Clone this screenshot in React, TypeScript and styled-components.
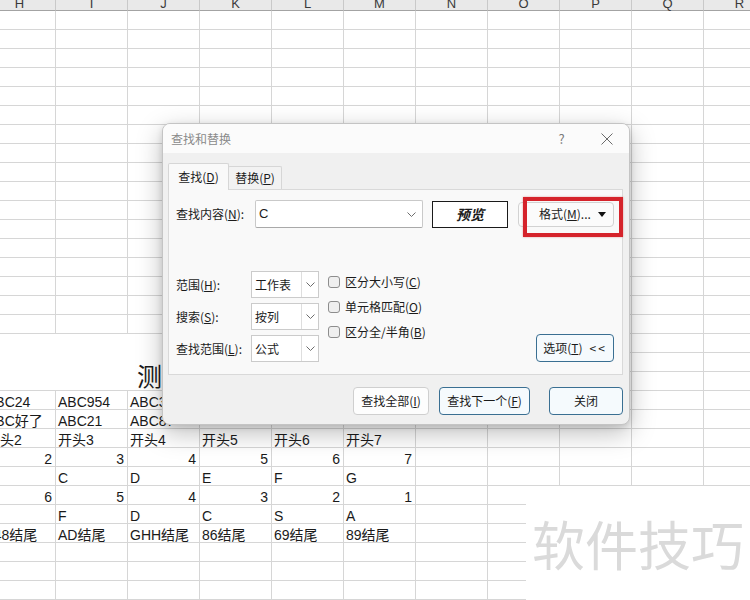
import React from 'react';
import styled, { createGlobalStyle } from 'styled-components';

const GlobalStyle = createGlobalStyle`
  *, *::before, *::after { box-sizing: border-box; }
  html, body { margin: 0; padding: 0; background: #ffffff; }
  body { font-family: "Liberation Sans", "Noto Sans CJK SC", sans-serif; }
`;

const Screen = styled.div`
  position: relative;
  width: 750px;
  height: 600px;
  overflow: hidden;
  background: #ffffff;
  font-family: "Liberation Sans", "Noto Sans CJK SC", sans-serif;
`;

/* ---------- spreadsheet ---------- */

const Sheet = styled.div`
  display: grid;
  grid-template-columns: repeat(11, 72px);
  grid-template-rows: 23px;
  grid-auto-rows: 19px;
  width: 792px;
  margin: -12px 0 0 -16px;
`;

const ColHeader = styled.div`
  display: flex;
  align-items: flex-end;
  justify-content: center;
  background: #e9e9e9;
  border-right: 1px solid #c9c9c9;
  border-bottom: 1px solid #a3a3a3;
  font-size: 13px;
  line-height: 13px;
  color: #3a3a3a;
`;

const Cell = styled.div<{ $num?: boolean }>`
  border-right: 1px solid #d6d6d6;
  border-bottom: 1px solid #d6d6d6;
  padding: 2px 3px 0 2px;
  font-size: 14px;
  line-height: 18px;
  color: #1a1a1a;
  white-space: nowrap;
  text-align: ${(p) => (p.$num ? 'right' : 'left')};
`;

const TitleCell = styled.div`
  grid-column: span 6;
  grid-row: span 3;
  border-right: 1px solid #d6d6d6;
  border-bottom: 1px solid #d6d6d6;
  display: flex;
  align-items: flex-end;
  justify-content: center;
  font-size: 25px;
  line-height: 25px;
  color: #1a1a1a;
  white-space: nowrap;
`;

const Watermark = styled.div`
  position: absolute;
  left: 526px;
  top: 486px;
  right: 0;
  bottom: 0;
  background: #ffffff;
  display: flex;
  align-items: center;
  justify-content: center;
  font-family: "Noto Sans CJK SC", sans-serif;
  font-size: 53px;
  line-height: 1;
  color: #dadada;
`;

/* ---------- dialog ---------- */

const Dialog = styled.div`
  position: absolute;
  left: 162px;
  top: 123px;
  width: 468px;
  height: 302px;
  display: flex;
  flex-direction: column;
  background: #f0f0f0;
  border: 1px solid #c4c4c4;
  border-radius: 8px;
  overflow: hidden;
  box-shadow: 0 8px 26px rgba(0, 0, 0, 0.26), 0 2px 6px rgba(0, 0, 0, 0.12);
  font-family: "Noto Sans CJK SC", "Liberation Sans", sans-serif;
  font-size: 12px;
  line-height: 16px;
  color: #1b1b1b;
`;

const TitleBar = styled.div`
  display: flex;
  align-items: center;
  height: 29px;
  padding-left: 8px;
  background: #fbfbfb;
`;

const TitleText = styled.div`
  flex: 1;
  color: #8a8a8a;
`;

const TitleButton = styled.div`
  width: 45px;
  height: 29px;
  display: flex;
  align-items: center;
  justify-content: center;
  color: #7a7a7a;
  font-size: 13px;
`;

const Body = styled.div`
  display: flex;
  flex-direction: column;
  padding: 10px 6px 9px 5px;
`;

const TabStrip = styled.div`
  display: flex;
  align-items: flex-end;
  height: 26px;
`;

const Tab = styled.div<{ $active?: boolean; $w: number }>`
  position: relative;
  z-index: 1;
  width: ${(p) => p.$w}px;
  height: ${(p) => (p.$active ? 27 : 23)}px;
  margin-bottom: ${(p) => (p.$active ? -1 : 0)}px;
  margin-left: ${(p) => (p.$active ? 0 : -1)}px;
  display: flex;
  align-items: center;
  justify-content: center;
  background: ${(p) => (p.$active ? '#f9f9f9' : '#f2f2f2')};
  border: 1px solid #d6d6d6;
  border-bottom: none;
  border-radius: 2px 2px 0 0;
`;

const Panel = styled.div`
  position: relative;
  height: 186px;
  background: #f9f9f9;
  border: 1px solid #d9d9d9;
`;

const Highlight = styled.div`
  position: absolute;
  left: 354px;
  top: 7px;
  width: 100px;
  height: 40px;
  border: 4px solid #d5232b;
  box-shadow: 0 0 2px rgba(180, 0, 0, 0.35);
  z-index: 2;
`;

const FindRow = styled.div`
  display: flex;
  align-items: center;
  height: 28px;
  margin-top: 10px;
  padding-left: 7px;
`;

const FieldLabel = styled.div<{ $w: number }>`
  width: ${(p) => p.$w}px;
  white-space: nowrap;
`;

const TextInput = styled.div`
  width: 168px;
  height: 28px;
  display: flex;
  align-items: center;
  justify-content: space-between;
  padding: 0 6px 0 3px;
  background: #ffffff;
  border: 1px solid #c9c9c9;
  border-bottom-color: #a9a9a9;
  border-radius: 2px;
  font-family: "Liberation Sans", sans-serif;
  font-size: 13px;
`;

const Preview = styled.div`
  width: 76px;
  height: 27px;
  margin-left: 9px;
  display: flex;
  align-items: center;
  justify-content: center;
  background: #ffffff;
  border: 1px solid #1a1a1a;
  font-size: 14px;
  font-weight: 700;
  font-style: italic;
`;

const FormatButton = styled.div`
  width: 96px;
  height: 25px;
  margin-left: 10px;
  display: flex;
  align-items: center;
  justify-content: space-between;
  padding: 0 7px 0 20px;
  background: #fbfbfb;
  border: 1px solid #d2d2d2;
  border-radius: 4px;
`;

const Caret = styled.span`
  width: 0;
  height: 0;
  border-left: 4px solid transparent;
  border-right: 4px solid transparent;
  border-top: 5px solid #111111;
`;

const OptionsArea = styled.div`
  display: flex;
  align-items: flex-end;
  margin-top: 43px;
  padding: 0 8px 0 7px;
`;

const ScopeGrid = styled.div`
  display: grid;
  grid-template-columns: 75px 68px;
  grid-auto-rows: 27px;
  row-gap: 5px;
  align-items: center;
`;

const Select = styled.div`
  height: 27px;
  display: grid;
  grid-template-columns: 1fr 17px;
  background: #ffffff;
  border: 1px solid #cbcbcb;
`;

const SelectValue = styled.div`
  display: flex;
  align-items: center;
  padding-left: 3px;
  white-space: nowrap;
`;

const SelectArrow = styled.div`
  display: flex;
  align-items: center;
  justify-content: center;
  border-left: 1px solid #dedede;
`;

const Checks = styled.div`
  align-self: flex-start;
  display: flex;
  flex-direction: column;
  gap: 3px;
  margin-left: 9px;
`;

const CheckRow = styled.div`
  display: flex;
  align-items: center;
  gap: 5px;
  height: 22px;
  white-space: nowrap;
`;

const CheckBox = styled.span`
  width: 12px;
  height: 12px;
  border: 1px solid #8d8d8d;
  border-radius: 3px;
  background: #efefef;
`;

const Button = styled.div<{ $w: number; $accent?: boolean; $space?: number }>`
  width: ${(p) => p.$w}px;
  height: 28px;
  margin-left: ${(p) => p.$space ?? 0}px;
  display: flex;
  align-items: center;
  justify-content: center;
  white-space: nowrap;
  border-radius: 4px;
  background: ${(p) => (p.$accent ? '#f5fafd' : '#fdfdfd')};
  border: 1px solid ${(p) => (p.$accent ? '#3a6f92' : '#cfcfcf')};
`;

const OptionsButton = styled(Button)`
  margin-left: auto;
`;

const Arrows = styled.span`
  margin-left: 7px;
  letter-spacing: 2px;
`;

const ButtonRow = styled.div`
  display: flex;
  justify-content: flex-end;
  margin-top: 12px;
`;

/* ---------- icons ---------- */

const Chevron = () => (
  <svg width="9" height="5" viewBox="0 0 9 5">
    <path d="M0.5 0.5 L4.5 4.5 L8.5 0.5" fill="none" stroke="#6d6d6d" strokeWidth="1" />
  </svg>
);

const CloseIcon = () => (
  <svg width="12" height="12" viewBox="0 0 12 12">
    <path d="M0.5 0.5 L11.5 11.5 M11.5 0.5 L0.5 11.5" fill="none" stroke="#6a6a6a" strokeWidth="1" />
  </svg>
);

/* ---------- data ---------- */

const COLS = ['H', 'I', 'J', 'K', 'L', 'M', 'N', 'O', 'P', 'Q', 'R'];
type V = string | number;
const DATA: Record<number, V[]> = {
  20: ['ABC24', 'ABC954', 'ABC35'],
  21: ['ABC好了', 'ABC21', 'ABC87'],
  22: ['开头2', '开头3', '开头4', '开头5', '开头6', '开头7'],
  23: [2, 3, 4, 5, 6, 7],
  24: ['', 'C', 'D', 'E', 'F', 'G'],
  25: [6, 5, 4, 3, 2, 1],
  26: ['', 'F', 'D', 'C', 'S', 'A'],
  27: ['248结尾', 'AD结尾', 'GHH结尾', '86结尾', '69结尾', '89结尾'],
};
const ROWS = 31;

function SheetGrid() {
  const cells: React.ReactNode[] = [];
  COLS.forEach((c) => cells.push(<ColHeader key={`h-${c}`}>{c}</ColHeader>));
  for (let r = 0; r < ROWS; r++) {
    for (let c = 0; c < COLS.length; c++) {
      const inTitle = r >= 17 && r <= 19 && c <= 5;
      if (inTitle) {
        if (r === 17 && c === 0) cells.push(<TitleCell key="title">测试数据表</TitleCell>);
        continue;
      }
      const v = DATA[r]?.[c];
      cells.push(
        <Cell key={`${r}-${c}`} $num={typeof v === 'number'}>
          {v ?? ''}
        </Cell>
      );
    }
  }
  return <Sheet>{cells}</Sheet>;
}

function FindReplaceDialog() {
  return (
    <Dialog>
      <TitleBar>
        <TitleText>查找和替换</TitleText>
        <TitleButton>?</TitleButton>
        <TitleButton>
          <CloseIcon />
        </TitleButton>
      </TitleBar>
      <Body>
        <TabStrip>
          <Tab $active $w={61}>
            查找(<u>D</u>)
          </Tab>
          <Tab $w={54}>
            替换(<u>P</u>)
          </Tab>
        </TabStrip>
        <Panel>
          <Highlight />
          <FindRow>
            <FieldLabel $w={79}>
              查找内容(<u>N</u>):
            </FieldLabel>
            <TextInput>
              <span>C</span>
              <Chevron />
            </TextInput>
            <Preview>预览</Preview>
            <FormatButton>
              <span>
                格式(<u>M</u>)...
              </span>
              <Caret />
            </FormatButton>
          </FindRow>
          <OptionsArea>
            <ScopeGrid>
              <FieldLabel $w={75}>
                范围(<u>H</u>):
              </FieldLabel>
              <Select>
                <SelectValue>工作表</SelectValue>
                <SelectArrow>
                  <Chevron />
                </SelectArrow>
              </Select>
              <FieldLabel $w={75}>
                搜索(<u>S</u>):
              </FieldLabel>
              <Select>
                <SelectValue>按列</SelectValue>
                <SelectArrow>
                  <Chevron />
                </SelectArrow>
              </Select>
              <FieldLabel $w={75}>
                查找范围(<u>L</u>):
              </FieldLabel>
              <Select>
                <SelectValue>公式</SelectValue>
                <SelectArrow>
                  <Chevron />
                </SelectArrow>
              </Select>
            </ScopeGrid>
            <Checks>
              <CheckRow>
                <CheckBox />
                <span>
                  区分大小写(<u>C</u>)
                </span>
              </CheckRow>
              <CheckRow>
                <CheckBox />
                <span>
                  单元格匹配(<u>O</u>)
                </span>
              </CheckRow>
              <CheckRow>
                <CheckBox />
                <span>
                  区分全/半角(<u>B</u>)
                </span>
              </CheckRow>
            </Checks>
            <OptionsButton $w={78} $accent>
              选项(<u>T</u>)<Arrows>&lt;&lt;</Arrows>
            </OptionsButton>
          </OptionsArea>
        </Panel>
        <ButtonRow>
          <Button $w={76}>
            查找全部(<u>I</u>)
          </Button>
          <Button $w={91} $accent $space={10}>
            查找下一个(<u>F</u>)
          </Button>
          <Button $w={74} $accent $space={19}>
            关闭
          </Button>
        </ButtonRow>
      </Body>
    </Dialog>
  );
}

export default function App() {
  return (
    <>
      <GlobalStyle />
      <Screen>
        <SheetGrid />
        <FindReplaceDialog />
        <Watermark>软件技巧</Watermark>
      </Screen>
    </>
  );
}
